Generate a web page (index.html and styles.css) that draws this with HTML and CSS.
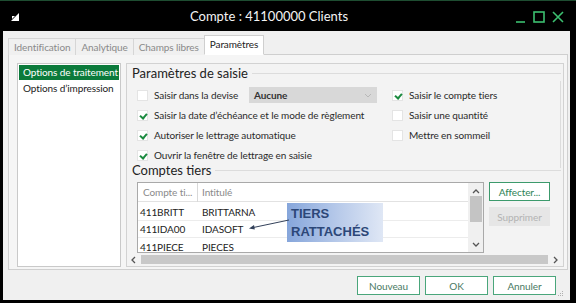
FILE: index.html
```html
<!DOCTYPE html>
<html lang="fr">
<head>
<meta charset="utf-8">
<title>Compte : 41100000 Clients</title>
<link rel="stylesheet" href="styles.css">
</head>
<body>
<div class="window">
  <div class="titlebar">
    <svg class="appicon" width="8" height="8" viewBox="0 0 8 8"><path d="M0 8 L8 0 L8 8 Z" fill="#fff"/><path d="M1 3 L4 3 L1 6 Z" fill="#fff"/></svg>
    <div class="title">Compte : 41100000 Clients</div>
    <div class="controls">
      <svg width="10" height="12" viewBox="0 0 10 12"><path d="M0 11 H9" stroke="#3cc070" stroke-width="1.6"/></svg>
      <svg width="12" height="12" viewBox="0 0 12 12"><rect x="1" y="1" width="10" height="10" fill="none" stroke="#3cc070" stroke-width="1.6"/></svg>
      <svg width="12" height="12" viewBox="0 0 12 12"><path d="M1 1 L11 11 M11 1 L1 11" stroke="#3cc070" stroke-width="1.6"/></svg>
    </div>
  </div>
  <div class="client">
    <div class="tabs">
      <div class="tab">Identification</div>
      <div class="tab">Analytique</div>
      <div class="tab">Champs libres</div>
      <div class="tab active">Paramètres</div>
    </div>
    <div class="panel">
      <div class="sidelist">
        <div class="sideitem selected">Options de traitement</div>
        <div class="sideitem">Options d’impression</div>
      </div>
      <div class="pane">
        <div class="pane-inner">
          <div class="group g1">
            <div class="gtitle"><span>Paramètres de saisie</span></div>
            <div class="gbody cols">
              <div class="col">
                <div class="row">
                  <span class="cb"></span><span class="lbl devise">Saisir dans la devise</span>
                  <div class="select">Aucune<svg width="8" height="5" viewBox="0 0 8 5"><path d="M1 1 L4 4 L7 1" fill="none" stroke="#b8b8b8" stroke-width="1"/></svg></div>
                </div>
                <div class="row"><span class="cb on"></span><span class="lbl">Saisir la date d’échéance et le mode de règlement</span></div>
                <div class="row"><span class="cb on"></span><span class="lbl">Autoriser le lettrage automatique</span></div>
                <div class="row"><span class="cb on"></span><span class="lbl">Ouvrir la fenêtre de lettrage en saisie</span></div>
              </div>
              <div class="col col2">
                <div class="row"><span class="cb on"></span><span class="lbl">Saisir le compte tiers</span></div>
                <div class="row"><span class="cb"></span><span class="lbl">Saisir une quantité</span></div>
                <div class="row"><span class="cb"></span><span class="lbl">Mettre en sommeil</span></div>
              </div>
            </div>
          </div>
          <div class="group g2">
            <div class="gtitle"><span>Comptes tiers</span></div>
            <div class="gbody tiers">
              <div class="grid">
                <div class="gridbody">
                  <div class="ghead"><div class="c1">Compte ti...</div><div class="c2">Intitulé</div></div>
                  <div class="grow"><div class="c1">411BRITT</div><div class="c2">BRITTARNA</div></div>
                  <div class="grow"><div class="c1">411IDA00</div><div class="c2">IDASOFT</div></div>
                  <div class="grow last"><div class="c1">411PIECE</div><div class="c2">PIECES</div></div>
                </div>
                <div class="vscroll">
                  <svg width="8" height="6" viewBox="0 0 8 6"><path d="M1 5 L4 2 L7 5" fill="none" stroke="#555" stroke-width="1.3"/></svg>
                  <div class="thumb"></div>
                  <svg width="8" height="6" viewBox="0 0 8 6"><path d="M1 1 L4 4 L7 1" fill="none" stroke="#555" stroke-width="1.3"/></svg>
                </div>
                <div class="note">TIERS<br>RATTACHÉS</div>
                <svg class="arrow" width="42" height="12" viewBox="0 0 42 12"><path d="M41 1 L3 9" stroke="#33415a" stroke-width="1"/><path d="M1 9.5 L6 6 L6.8 10.6 Z" fill="#33415a"/></svg>
              </div>
              <div class="btns">
                <div class="btn green">Affecter...</div>
                <div class="btn disabled">Supprimer</div>
              </div>
            </div>
          </div>
        </div>
        <div class="hscroll">
          <svg width="6" height="8" viewBox="0 0 6 8"><path d="M5 1 L2 4 L5 7" fill="none" stroke="#555" stroke-width="1.3"/></svg>
          <div class="htrack"></div>
          <svg width="6" height="8" viewBox="0 0 6 8"><path d="M1 1 L4 4 L1 7" fill="none" stroke="#555" stroke-width="1.3"/></svg>
        </div>
      </div>
    </div>
    <div class="footer">
      <div class="btn action">Nouveau</div>
      <div class="btn action">OK</div>
      <div class="btn action">Annuler</div>
      <svg class="grip" width="6" height="6" viewBox="0 0 6 6"><g fill="#b0b0b0"><rect x="4" y="0" width="1" height="1"/><rect x="2" y="2" width="1" height="1"/><rect x="4" y="2" width="1" height="1"/><rect x="0" y="4" width="1" height="1"/><rect x="2" y="4" width="1" height="1"/><rect x="4" y="4" width="1" height="1"/></g></svg>
    </div>
  </div>
</div>
</body>
</html>
```
FILE: styles.css
```css
* { box-sizing: border-box; }
html, body { margin: 0; padding: 0; }
body {
  width: 576px;
  height: 306px;
  background: #fff;
  font-family: Lato, "Noto Sans", sans-serif;
  font-size: 10px;
  letter-spacing: -0.1px;
  color: #222;
  overflow: hidden;
}
.window {
  width: 576px;
  height: 303px;
  background: #000;
  border-top: 1px solid #1e4d31;
  padding: 0 6px 3px 3px;
  display: flex;
  flex-direction: column;
}
.titlebar {
  height: 30px;
  display: flex;
  align-items: center;
  position: relative;
  color: #fff;
}
.appicon { margin-left: 8px; margin-top: 2px; }
.title {
  position: absolute;
  left: 187px;
  top: 7px;
  font-size: 13px;
  letter-spacing: 0;
  color: #f4f4f4;
}
.controls {
  margin-left: auto;
  display: flex;
  align-items: center;
  gap: 7px;
  margin-right: 6px;
  margin-top: 1px;
}
.client {
  flex: 1;
  background: #f0f0f0;
  display: flex;
  flex-direction: column;
  padding: 5px 2px 0 5px;
}
.tabs {
  display: flex;
  align-items: flex-end;
  height: 19px;
  margin-bottom: -1px;
  position: relative;
  z-index: 1;
}
.tab {
  height: 17px;
  padding: 0 5px;
  border: 1px solid #d6d6d6;
  border-right: none;
  border-bottom: none;
  color: #8a8a8a;
  line-height: 16px;
  background: #f0f0f0;
}
.tab.active {
  height: 20px;
  background: #fff;
  color: #222;
  border: 1px solid #cfcfcf;
  border-bottom: 1px solid #fff;
  padding: 0 5px;
  line-height: 16px;
}
.panel {
  height: 216px;
  border: 1px solid #cfcfcf;
  background: #f5f5f5;
  display: flex;
  padding: 8px 3px 2px 8px;
  gap: 5px;
}
.sidelist {
  width: 104px;
  background: #fff;
  border: 1px solid #c9c9c9;
  padding: 1px;
}
.sideitem {
  height: 15px;
  line-height: 15px;
  padding-left: 4px;
  color: #222;
  margin-bottom: 1px;
  white-space: nowrap;
}
.sideitem.selected {
  background: #0b7a3b;
  color: #fff;
}
.pane {
  flex: 1;
  border: 1px solid #d2d2d2;
  background: #f3f3f3;
  display: flex;
  flex-direction: column;
}
.pane-inner {
  flex: 1;
  padding: 0 2px 0 5px;
}
.gtitle {
  display: flex;
  align-items: center;
  font-size: 13px;
  letter-spacing: 0;
  color: #222;
  height: 16px;
  line-height: 16px;
}
.gtitle::after {
  content: "";
  flex: 1;
  height: 1px;
  background: #dcdcdc;
  margin-left: 4px;
  margin-top: 1px;
}
.g1 .gtitle { margin-top: 1px; }
.g1 .gbody {
  border-right: 1px solid #dcdcdc;
  height: 87px;
}
.cols {
  display: flex;
  padding: 4px 0 0 5px;
}
.col2 { margin-left: 15px; }
.row {
  display: flex;
  align-items: center;
  height: 20px;
  white-space: nowrap;
}
.cb {
  width: 11px;
  height: 11px;
  background: #fff;
  border: 1px solid #e4e4e4;
  margin-right: 6px;
  position: relative;
  flex: none;
}
.cb.on::after {
  content: "";
  position: absolute;
  left: 3px;
  top: 1px;
  width: 3px;
  height: 5px;
  border-right: 2px solid #1b8a3f;
  border-bottom: 2px solid #1b8a3f;
  transform: rotate(40deg);
}
.lbl { color: #2a2a2a; }
.lbl.devise { width: 95px; }
.select {
  width: 128px;
  height: 16px;
  background: #d8d8d8;
  display: flex;
  align-items: center;
  justify-content: space-between;
  padding: 0 5px;
  font-weight: bold;
  color: #333;
}
.g2 .gtitle { margin-top: -6px; }
.tiers {
  display: flex;
  padding: 4px 0 0 5px;
  gap: 5px;
}
.grid {
  width: 347px;
  height: 71px;
  border: 1px solid #a9a9a9;
  background: #fff;
  display: flex;
  position: relative;
}
.gridbody { flex: 1; }
.ghead, .grow {
  display: flex;
  align-items: center;
}
.ghead {
  height: 19px;
  color: #8a8a8a;
  border-bottom: 1px solid #e2e2e2;
  margin-bottom: 2px;
}
.ghead .c1 { border-right: 1px solid #d9d9d9; padding-left: 5px; height: 19px; line-height: 19px; }
.grow {
  height: 17px;
  border-bottom: 1px solid #ececec;
  color: #222;
}
.grow.last { border-bottom: none; }
.c1 { width: 60px; padding-left: 2px; }
.c2 { padding-left: 4px; }
.vscroll {
  width: 15px;
  background: #f0f0f0;
  display: flex;
  flex-direction: column;
  align-items: center;
  justify-content: space-between;
  padding: 5px 0 4px;
}
.thumb {
  width: 12px;
  height: 26px;
  background: #c4c4c4;
  margin-top: 2px;
  margin-bottom: auto;
}
.note {
  position: absolute;
  left: 149px;
  top: 20px;
  width: 96px;
  height: 39px;
  padding: 2px 0 0 4px;
  background: linear-gradient(90deg, #86a6db 0%, #b9cbea 55%, #dfe7f5 100%);
  font-family: "Liberation Sans", Arial, sans-serif;
  font-weight: bold;
  font-size: 13px;
  letter-spacing: 0;
  line-height: 18px;
  color: #2c4778;
}
.arrow {
  position: absolute;
  left: 110px;
  top: 36px;
}
.btns {
  display: flex;
  flex-direction: column;
  gap: 6px;
}
.btn {
  height: 19px;
  width: 61px;
  display: flex;
  align-items: center;
  justify-content: center;
}
.btn.green {
  border: 1.5px solid #3c9a6c;
  background: #fff;
  color: #2d8256;
}
.btn.disabled {
  background: #e6e6e6;
  color: #b3b3b3;
}
.hscroll {
  height: 11px;
  display: flex;
  align-items: center;
  padding: 0 4px 0 3px;
  gap: 5px;
  margin-bottom: 1px;
}
.htrack {
  flex: 1;
  height: 9px;
  background: #c8c8c8;
}
.footer {
  flex: 1;
  display: flex;
  align-items: flex-start;
  padding: 6px 0 0 349px;
  gap: 5px;
  position: relative;
}
.btn.action {
  width: 63px;
  height: 19px;
  border: 1.5px solid #4aa67b;
  background: #fff;
  color: #4a7a63;
}
.grip {
  position: absolute;
  right: 4px;
  bottom: 3px;
}
```
